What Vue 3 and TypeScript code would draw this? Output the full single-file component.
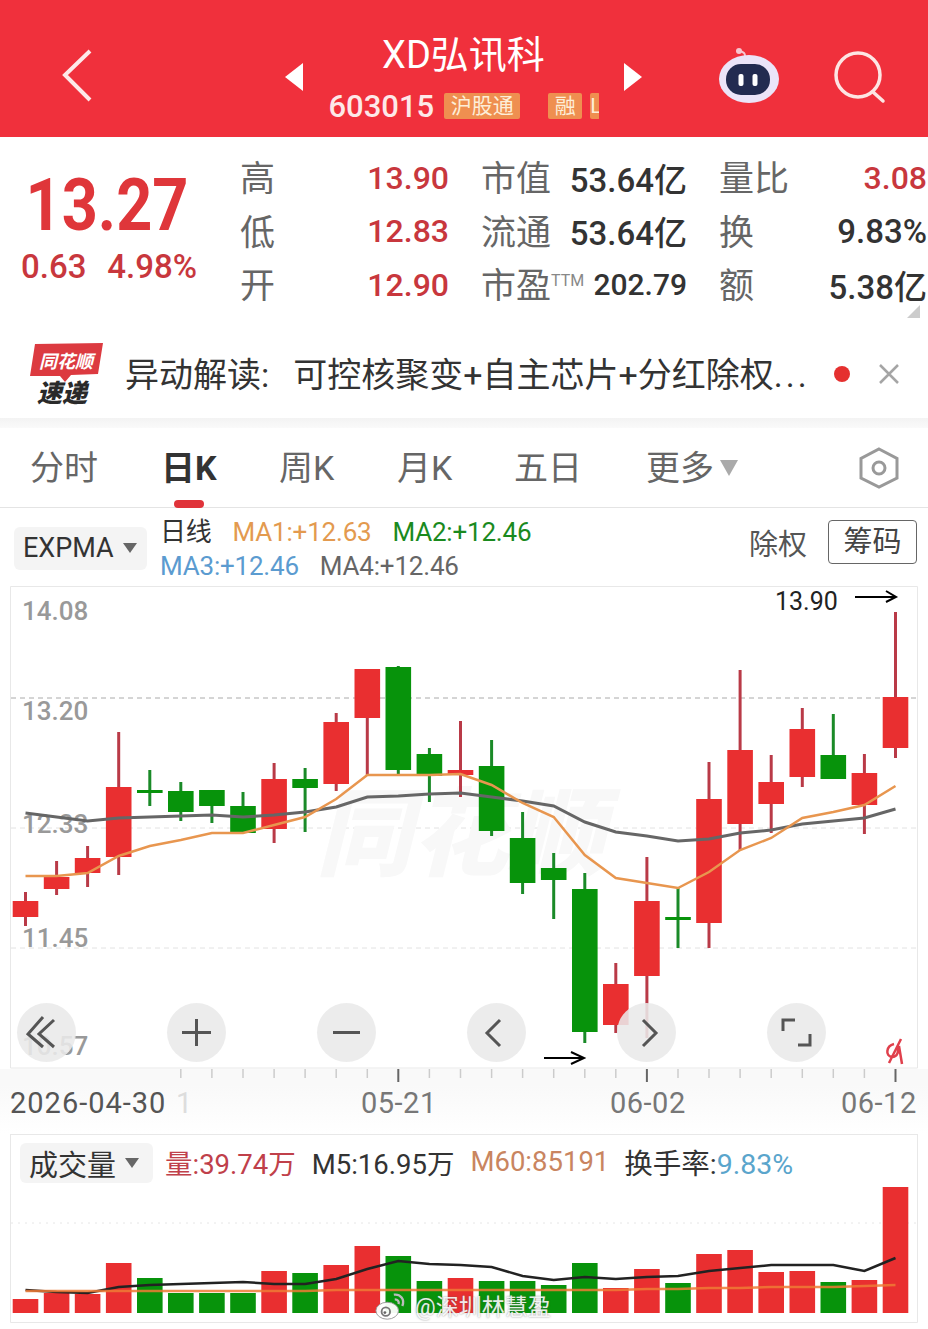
<template>
  <div class="page">
    <header class="topbar">
      <svg class="back" viewBox="60 47 36 56"><path d="M90 51 L65 75 L90 100" /></svg>
      <i class="arrow-left"></i>
      <div class="stock">
        <div class="stock-name">XD弘讯科</div>
        <div class="stock-sub">
          <span class="stock-code">603015</span>
          <span class="tag tag-hk">沪股通</span>
          <span class="tag tag-rong">融</span>
          <span class="tag tag-cut">L</span>
        </div>
      </div>
      <i class="arrow-right"></i>
      <svg class="robot" viewBox="719 47 60 60">
        <path class="robot-ant" d="M745 57 Q746 52 739 51" />
        <circle cx="739" cy="51" r="3" fill="#f7c6d0" />
        <ellipse cx="749" cy="79" rx="30" ry="24" fill="#ebe4f8" />
        <rect x="726" y="64" width="44" height="31" rx="15" fill="#222b50" />
        <rect x="738.5" y="74" width="5" height="12" rx="2" fill="#fff" />
        <rect x="752.5" y="74" width="5" height="12" rx="2" fill="#fff" />
      </svg>
      <svg class="search" viewBox="832 48 54 56">
        <circle cx="858" cy="75" r="22" />
        <path d="M873 92 L883 101" />
      </svg>
    </header>

    <section class="quote">
      <div class="price-box">
        <div class="price">13.27</div>
        <div class="change"><span>0.63</span><span>4.98%</span></div>
      </div>
      <div class="quote-grid">
        <div v-for="cell in quoteCells" :key="cell.label" class="quote-cell">
          <span class="q-label">{{ cell.label }}<sup v-if="cell.sup" class="q-sup">{{ cell.sup }}</sup></span>
          <span class="q-value" :class="cell.tone">{{ cell.value }}</span>
        </div>
      </div>
      <i class="corner"></i>
    </section>

    <section class="news">
      <svg class="news-logo" viewBox="25 340 84 70">
        <path d="M35 345 L103 344 L98 375 L71 376 L65 383 L60 377 L30 377 Z" fill="#dc3a40" />
        <text x="39" y="369" class="logo-top">同花顺</text>
        <text x="37" y="403" class="logo-bot">速递</text>
      </svg>
      <div class="news-text">异动解读:<span class="news-body">可控核聚变+自主芯片+分红除权<span class="news-dots">...</span></span></div>
      <i class="news-dot"></i>
      <svg class="news-close" viewBox="0 0 22 22"><path d="M2 2 L20 20 M20 2 L2 20" /></svg>
    </section>
    <div class="strip"></div>

    <nav class="tabs">
      <span
        v-for="tab in tabs"
        :key="tab.label"
        class="tab"
        :class="{ active: tab.active }"
        :style="{ left: tab.left + 'px' }"
      >{{ tab.label }}</span>
      <i class="more-arrow"></i>
      <svg class="hex" viewBox="858 446 42 44">
        <path d="M879 449 L897 458.500 V478 L879 487 L861 478 V458.500 Z" />
        <circle cx="879" cy="468" r="6" />
      </svg>
    </nav>

    <section class="indicator">
      <div class="pill pill-expma">EXPMA<i class="pill-arrow"></i></div>
      <div class="ma-lines">
        <div class="ma-row">
          <span class="ma-day">日线</span>
          <span class="ma1">MA1:+12.63</span>
          <span class="ma2">MA2:+12.46</span>
        </div>
        <div class="ma-row">
          <span class="ma3">MA3:+12.46</span>
          <span class="ma4">MA4:+12.46</span>
        </div>
      </div>
      <span class="adjust">除权</span>
      <span class="chips">筹码</span>
    </section>

    <section class="chart">
      <svg class="chart-svg" viewBox="0 586 928 499" width="928" height="499">
        <rect x="0" y="1069" width="928" height="16" fill="#f9f9f9" />
        <path class="frame" d="M10.500 1068 V586.500 H917.500 V1068 H10.500" />
        <path class="dash-main" d="M11 698 H917" />
        <path class="dash-soft" d="M11 828 H917 M11 948 H917" />
        <text x="316" y="868" class="watermark">同花顺</text>
        <text v-for="axis in yAxis" :key="axis.text" x="22" :y="axis.y" class="y-label">{{ axis.text }}</text>

        <g v-for="c in candles" :key="c.x">
          <path :d="`M${c.x} ${c.high} V${c.low}`" :class="c.up ? 'wick-up' : 'wick-down'" />
          <rect
            :x="c.x - 12.800"
            :y="c.top"
            width="25.600"
            :height="Math.max(c.bottom - c.top, 3)"
            :fill="c.up ? '#e92f30' : '#07930b'"
          />
        </g>
        <polyline class="ma-grey" :points="greyLine" />
        <polyline class="ma-orange" :points="orangeLine" />

        <text x="775" y="610" class="note">13.90</text>
        <path class="note-arrow" d="M855 597 H896 M886 591 L896 597 L886 602" />
        <path class="note-arrow" d="M544 1058 H584 M571 1052 L584 1058 L571 1064" />
        <path class="scribble" d="M901 1039 L889 1063 M894 1044 C886 1046 885 1056 892 1057 C898 1057 899 1050 898 1046 M899 1046 L902 1064" />

        <path
          v-for="t in ticks"
          :key="t.x"
          :d="`M${t.x} 1069 V${t.major ? 1082 : 1078}`"
          :class="t.major ? 'tick-major' : 'tick'"
        />
      </svg>
      <div class="chart-tools">
        <span class="tool">
          <svg viewBox="0 0 59 59"><path d="M26 14 L11 31 L26 44 M37 17 L22 31 L37 44" /></svg>
        </span>
        <span class="tool">
          <svg viewBox="0 0 59 59"><path d="M15 29.500 H44 M29.500 16 V43" /></svg>
        </span>
        <span class="tool">
          <svg viewBox="0 0 59 59"><path d="M16 29.500 H43" /></svg>
        </span>
        <span class="tool">
          <svg viewBox="0 0 59 59"><path d="M33 17 L20 30 L33 43" /></svg>
        </span>
        <span class="tool">
          <svg viewBox="0 0 59 59"><path d="M26 17 L39 30 L26 43" /></svg>
        </span>
        <span class="tool">
          <svg viewBox="0 0 59 59"><path d="M16 28 V17 H28 M43 31 V42 H31" /></svg>
        </span>
      </div>
    </section>

    <div class="dates">
      <span class="date-first">2026-04-30</span>
      <span class="date-ghost">1</span>
      <span class="date d1">05-21</span>
      <span class="date d2">06-02</span>
      <span class="date d3">06-12</span>
    </div>

    <section class="volume">
      <div class="vol-head">
        <div class="pill pill-vol">成交量<i class="pill-arrow"></i></div>
        <span class="v-red">量:39.74万</span>
        <span class="v-dark">M5:16.95万</span>
        <span class="v-tan">M60:85191</span>
        <span class="v-dark v-last">换手率:<span class="v-blue">9.83%</span></span>
      </div>
      <svg class="vol-svg" viewBox="0 1187 928 142" width="928" height="142">
        <path class="frame" d="M10.500 1187 V1322.500 H917.500 V1187" />
        <path class="vol-dots" d="M11 1223 H917" />
        <rect
          v-for="bar in volumeBars"
          :key="bar.x"
          :x="bar.x - 12.800"
          :y="bar.top"
          width="25.600"
          :height="1313 - bar.top"
          :fill="bar.up ? '#e92f30' : '#07930b'"
        />
        <polyline class="vol-black" :points="volBlackLine" />
        <polyline class="vol-orange" :points="volOrangeLine" />
      </svg>
    </section>

    <div class="weibo">
      <svg class="weibo-icon" viewBox="0 0 34 32">
        <ellipse cx="13" cy="21" rx="12" ry="9" />
        <circle cx="11.500" cy="22" r="4.500" class="weibo-eye" />
        <circle cx="10.500" cy="23" r="1.500" fill="#666" />
        <path class="weibo-arc" d="M20 4 C27 3 32 9 29 16 M21 9 C24 9 26 11 25 14" />
      </svg>
      <span>@深圳林慧盈</span>
    </div>
  </div>
</template>

<script setup lang="ts">
interface QuoteCell {
  label: string
  sup?: string
  value: string
  tone: string
}

// 每根K线: 最高, 实体上沿, 实体下沿, 最低, 是否上涨
type Raw = [number, number, number, number, boolean]

const START_X = 25.5
const STEP = 31.07

const xAt = (i: number): number => +(START_X + STEP * i).toFixed(1)

const quoteCells: QuoteCell[] = [
  { label: '高', value: '13.90', tone: 'red' },
  { label: '市值', value: '53.64亿', tone: 'dark' },
  { label: '量比', value: '3.08', tone: 'red' },
  { label: '低', value: '12.83', tone: 'red' },
  { label: '流通', value: '53.64亿', tone: 'dark' },
  { label: '换', value: '9.83%', tone: 'dark' },
  { label: '开', value: '12.90', tone: 'red' },
  { label: '市盈', sup: 'TTM', value: '202.79', tone: 'dark narrow' },
  { label: '额', value: '5.38亿', tone: 'dark' }
]

const tabs = [
  { label: '分时', left: 30 },
  { label: '日K', left: 161, active: true },
  { label: '周K', left: 279 },
  { label: '月K', left: 397 },
  { label: '五日', left: 514 },
  { label: '更多', left: 646 }
]

const yAxis = [
  { text: '14.08', y: 620 },
  { text: '13.20', y: 720 },
  { text: '12.33', y: 833 },
  { text: '11.45', y: 947 },
  { text: '10.57', y: 1055 }
]

const rawCandles: Raw[] = [
  [892, 901, 917, 926, true],
  [861, 877, 889, 895, true],
  [846, 858, 873, 887, true],
  [732, 787, 857, 875, true],
  [770, 790, 792, 806, false],
  [782, 791, 812, 821, false],
  [790, 790, 806, 823, false],
  [792, 806, 833, 833, false],
  [763, 779, 829, 843, true],
  [768, 779, 788, 832, false],
  [713, 722, 784, 791, true],
  [669, 669, 718, 775, true],
  [666, 667, 770, 775, false],
  [748, 754, 776, 802, false],
  [721, 770, 775, 797, true],
  [740, 766, 831, 836, false],
  [812, 838, 883, 894, false],
  [853, 868, 880, 919, false],
  [873, 889, 1032, 1043, false],
  [963, 984, 1025, 1033, true],
  [857, 901, 976, 1038, true],
  [888, 917, 920, 948, false],
  [762, 799, 923, 948, true],
  [670, 750, 824, 850, true],
  [755, 782, 804, 833, true],
  [708, 729, 777, 787, true],
  [714, 755, 779, 779, false],
  [754, 773, 805, 834, true],
  [612, 697, 748, 758, true]
]

const candles = rawCandles.map((c, i) => ({
  x: xAt(i),
  high: c[0],
  top: c[1],
  bottom: c[2],
  low: c[3],
  up: c[4]
}))

const toPoints = (ys: number[]): string => ys.map((y, i) => `${xAt(i)},${y}`).join(' ')

const orangeLine = toPoints([
  876, 876, 873, 856, 846, 840, 833, 833, 825, 817, 799, 775, 775, 775, 774,
  785, 803, 817, 855, 878, 883, 888, 872, 850, 838, 818, 812, 805, 786
])

const greyLine = toPoints([
  813, 817, 821, 818, 817, 816, 815, 817, 815, 812, 807, 797, 796, 794, 793,
  797, 801, 806, 822, 832, 836, 841, 839, 833, 830, 824, 821, 818, 809
])

const ticks = Array.from({ length: 24 }, (_, i) => {
  const n = i + 5
  return { x: xAt(n), major: n === 12 || n === 20 || n === 28 }
})

const volumeTops = [
  1299, 1293, 1294, 1263, 1278, 1293, 1293, 1293, 1271, 1273, 1265, 1246, 1256, 1281, 1278,
  1281, 1281, 1285, 1263, 1288, 1269, 1283, 1254, 1250, 1272, 1271, 1282, 1280, 1187
]

const volumeGreen = [4, 5, 6, 7, 9, 12, 13, 15, 16, 17, 18, 21, 26]

const volumeBars = volumeTops.map((top, i) => ({
  x: xAt(i),
  top,
  up: !volumeGreen.includes(i)
}))

const volBlackLine = toPoints([
  1290, 1292, 1293, 1287, 1285, 1284, 1283, 1282, 1284, 1284, 1279, 1269, 1261, 1264, 1265,
  1267, 1276, 1280, 1277, 1279, 1277, 1276, 1271, 1268, 1265, 1265, 1265, 1271, 1258
])

const volOrangeLine = toPoints([
  1291, 1291, 1291, 1291, 1291, 1291, 1291, 1291, 1291, 1291, 1290, 1290, 1290, 1290, 1290,
  1290, 1290, 1290, 1290, 1290, 1289, 1289, 1288, 1288, 1287, 1287, 1287, 1286, 1285
])
</script>

<style>
html,
body {
  margin: 0;
  background: #fff;
}
</style>

<style scoped>
.page {
  position: relative;
  width: 928px;
  height: 1329px;
  overflow: hidden;
  background: #fff;
  font-family: Roboto, "Noto Sans CJK SC", sans-serif;
  color: #333;
}

.page i {
  display: block;
  flex: none;
}

/* 顶栏 */
.topbar {
  display: flex;
  align-items: center;
  box-sizing: border-box;
  height: 137px;
  padding-top: 13px;
  background: #f0303c;
  color: #fff;
}

.back {
  width: 36px;
  height: 56px;
  margin-left: 60px;
  fill: none;
  stroke: #fde9e9;
  stroke-width: 4;
}

.arrow-left,
.arrow-right {
  width: 0;
  height: 0;
  margin-top: 3px;
  border-top: 14px solid transparent;
  border-bottom: 14px solid transparent;
}

.arrow-left {
  margin-left: 189px;
  border-right: 18px solid #fff;
}

.arrow-right {
  border-left: 18px solid #fff;
}

.stock {
  display: flex;
  flex-direction: column;
  align-items: center;
  width: 321px;
}

.stock-name {
  font-size: 38px;
  line-height: 46px;
  margin-top: 5px;
}

.stock-sub {
  display: flex;
  align-items: center;
  width: 270px;
  height: 34px;
  margin-top: 11px;
  overflow: hidden;
}

.stock-code {
  font-size: 31px;
  font-weight: 500;
  color: #fde9e9;
  margin-right: 10px;
}

.tag {
  flex: none;
  height: 26px;
  line-height: 26px;
  background: #ef8f50;
  color: #fdeed8;
  font-size: 21px;
  text-align: center;
  border-radius: 2px;
  overflow: hidden;
}

.tag-hk {
  width: 76px;
}

.tag-rong {
  width: 34px;
  margin-left: 28px;
}

.tag-cut {
  width: 10px;
  margin-left: 8px;
}

.robot {
  width: 60px;
  height: 60px;
  margin-left: 77px;
  margin-top: 4px;
}

.robot-ant {
  fill: none;
  stroke: #f7c6d0;
  stroke-width: 2;
}

.search {
  width: 54px;
  height: 56px;
  margin-left: 53px;
  margin-top: 2px;
  fill: none;
  stroke: #fde5e3;
  stroke-width: 3.500;
  stroke-linecap: round;
}

/* 报价 */
.quote {
  position: relative;
  display: flex;
  height: 193px;
  padding-left: 21px;
}

.price-box {
  width: 176px;
  flex: none;
}

.price {
  margin-top: 36px;
  padding-right: 4px;
  text-align: center;
  font-size: 63px;
  line-height: 66px;
  font-weight: 700;
  color: #df363a;
  transform: scaleY(1.14);
}

.change {
  display: flex;
  justify-content: space-between;
  margin-top: 9px;
  font-size: 33px;
  line-height: 38px;
  font-weight: 500;
  color: #c8373d;
}

.quote-grid {
  display: grid;
  grid-template-columns: 209px 206px 208px;
  column-gap: 32px;
  grid-auto-rows: 53.500px;
  margin-left: 43px;
  padding-top: 14px;
}

.quote-cell {
  display: flex;
  align-items: center;
  justify-content: space-between;
}

.q-label {
  margin-top: -4px;
  font-size: 35px;
  color: #666;
  white-space: nowrap;
}

.q-sup {
  font-size: 16px;
  vertical-align: 12px;
  line-height: 0;
  color: #888;
}

.q-value {
  font-weight: 500;
  white-space: nowrap;
}

.q-value.red {
  font-size: 32px;
  color: #c8373d;
}

.q-value.dark {
  font-size: 33px;
  color: #333;
}

.q-value.narrow {
  font-size: 30px;
}

.corner {
  position: absolute;
  right: 8px;
  top: 168px;
  width: 0;
  height: 0;
  border-left: 13px solid transparent;
  border-bottom: 13px solid #ccc;
}

/* 异动解读 */
.news {
  display: flex;
  align-items: center;
  height: 88px;
}

.news-logo {
  width: 84px;
  height: 70px;
  margin-left: 25px;
  flex: none;
}

.logo-top {
  font-size: 18px;
  font-weight: 700;
  font-style: italic;
  fill: #fff;
}

.logo-bot {
  font-size: 25px;
  font-weight: 900;
  font-style: italic;
  fill: #2a2a2a;
}

.news-text {
  width: 700px;
  margin-left: 16px;
  margin-top: -4px;
  font-size: 34px;
  white-space: nowrap;
  overflow: hidden;
  color: #333;
}

.news-body {
  margin-left: 24px;
}

.news-dots {
  letter-spacing: 3px;
}

.news-dot {
  width: 16px;
  height: 16px;
  margin-left: 9px;
  border-radius: 50%;
  background: #e5302f;
}

.news-close {
  width: 22px;
  height: 22px;
  margin-left: 28px;
  fill: none;
  stroke: #a5a5a5;
  stroke-width: 2.500;
}

.strip {
  height: 10px;
  background: linear-gradient(#f3f3f3, #fafafa);
}

/* 周期切换 */
.tabs {
  position: relative;
  height: 79px;
  border-bottom: 1px solid #e4e4e4;
  box-sizing: content-box;
}

.tab {
  position: absolute;
  top: 17px;
  font-size: 34px;
  line-height: 46px;
  color: #666;
}

.tab.active {
  font-weight: 700;
  color: #333;
}

.tab.active::after {
  content: "";
  position: absolute;
  left: 13px;
  top: 55px;
  width: 30px;
  height: 8px;
  border-radius: 4px;
  background: #e0333a;
}

.more-arrow {
  position: absolute;
  left: 720px;
  top: 32px;
  width: 0;
  height: 0;
  border-left: 9px solid transparent;
  border-right: 9px solid transparent;
  border-top: 16px solid #aaa;
}

.hex {
  position: absolute;
  left: 858px;
  top: 18px;
  width: 42px;
  height: 44px;
  fill: none;
  stroke: #999;
  stroke-width: 3;
}

/* 指标栏 */
.indicator {
  position: relative;
  display: flex;
  align-items: center;
  height: 78px;
  padding-left: 14px;
}

.pill {
  display: flex;
  align-items: center;
  background: #f4f4f4;
  border-radius: 6px;
  box-sizing: border-box;
  color: #333;
}

.pill-expma {
  width: 133px;
  height: 43px;
  padding-left: 9px;
  font-size: 27px;
  margin-top: 2px;
}

.pill-arrow {
  width: 0;
  height: 0;
  margin-left: 9px;
  border-left: 7px solid transparent;
  border-right: 7px solid transparent;
  border-top: 10px solid #666;
}

.ma-lines {
  margin-left: 13px;
  margin-top: 4px;
  font-size: 26px;
  line-height: 34px;
  letter-spacing: -0.2px;
}

.ma-row {
  display: flex;
  gap: 21px;
  white-space: nowrap;
}

.ma-day {
  color: #333;
}

.ma1 {
  color: #e39a4f;
}

.ma2 {
  color: #1a8a1e;
}

.ma3 {
  color: #5b9bd0;
}

.ma4 {
  color: #666;
}

.adjust {
  margin-left: auto;
  margin-bottom: 10px;
  font-size: 29px;
  color: #555;
}

.chips {
  margin-left: 21px;
  margin-right: 11px;
  margin-bottom: 11px;
  box-sizing: border-box;
  width: 89px;
  height: 44px;
  line-height: 42px;
  text-align: center;
  font-size: 29px;
  color: #444;
  border: 1px solid #666;
  border-radius: 4px;
}

/* K线图 */
.chart {
  position: relative;
  height: 499px;
}

.chart-svg {
  display: block;
}

.frame {
  fill: none;
  stroke: #e8e8e8;
  stroke-width: 1;
}

.dash-main {
  stroke: #aaa;
  stroke-width: 1;
  stroke-dasharray: 5 4;
}

.dash-soft {
  stroke: #e2e2e2;
  stroke-width: 1;
  stroke-dasharray: 5 4;
}

.watermark {
  font-size: 96px;
  font-weight: 900;
  font-style: italic;
  fill: #f8f8f8;
}

.y-label {
  font-size: 26px;
  font-weight: 500;
  fill: #999;
}

.wick-up {
  stroke: #b93a47;
  stroke-width: 3;
}

.wick-down {
  stroke: #1a8a28;
  stroke-width: 3;
}

.ma-orange {
  fill: none;
  stroke: #e8964f;
  stroke-width: 2.500;
}

.ma-grey {
  fill: none;
  stroke: #666;
  stroke-width: 3;
}

.note {
  font-size: 25px;
  fill: #222;
}

.note-arrow {
  fill: none;
  stroke: #000;
  stroke-width: 2;
}

.scribble {
  fill: none;
  stroke: #e0404c;
  stroke-width: 2.500;
}

.tick {
  stroke: #ccc;
  stroke-width: 1.500;
}

.tick-major {
  stroke: #666;
  stroke-width: 2;
}

.chart-tools {
  position: absolute;
  left: 17px;
  top: 417px;
  display: flex;
  gap: 91px;
}

.tool {
  display: block;
  width: 59px;
  height: 59px;
  border-radius: 50%;
  background: rgba(233, 233, 233, 0.88);
}

.tool svg {
  display: block;
  fill: none;
  stroke: #555;
  stroke-width: 3;
}

/* 日期 */
.dates {
  position: relative;
  height: 49px;
  font-size: 29px;
  line-height: 36px;
  letter-spacing: 0.5px;
  color: #777;
  background: linear-gradient(#f9f9f9, #fff);
}

.date-first {
  position: absolute;
  left: 10px;
  letter-spacing: 1px;
  color: #555;
}

.date-ghost {
  position: absolute;
  left: 176px;
  color: #ddd;
}

.date {
  position: absolute;
}

.d1 {
  left: 361px;
}

.d2 {
  left: 610px;
}

.d3 {
  left: 841px;
}

/* 成交量 */
.vol-head {
  display: flex;
  align-items: center;
  gap: 16px;
  height: 53px;
  margin: 0 10px;
  padding-left: 9px;
  padding-top: 4px;
  box-sizing: border-box;
  border-top: 1px solid #e8e8e8;
  border-left: 1px solid #e8e8e8;
  border-right: 1px solid #e8e8e8;
  font-size: 27.500px;
  white-space: nowrap;
}

.vol-head > span {
  margin-top: -3px;
}

.vol-head > .v-last {
  margin-left: -1px;
  font-size: 28.500px;
}

.pill-vol {
  width: 133px;
  height: 40px;
  padding-left: 9px;
  font-size: 29px;
  flex: none;
  margin-right: -4px;
}

.v-red {
  color: #c0404a;
}

.v-dark {
  color: #333;
}

.v-tan {
  color: #c98560;
}

.v-blue {
  color: #5aa5cc;
}

.vol-svg {
  display: block;
}

.vol-dots {
  stroke: #e6e6e6;
  stroke-width: 1;
  stroke-dasharray: 2 5;
}

.vol-black {
  fill: none;
  stroke: #222;
  stroke-width: 2.500;
}

.vol-orange {
  fill: none;
  stroke: #ee7a35;
  stroke-width: 2.500;
  opacity: 0.85;
}

/* 水印 */
.weibo {
  position: absolute;
  left: 375px;
  top: 1291px;
  display: flex;
  align-items: center;
  gap: 8px;
  font-size: 23px;
  line-height: 34px;
  color: rgba(255, 255, 255, 0.9);
  text-shadow: 0 0 2px rgba(90, 90, 90, 0.7);
  white-space: nowrap;
}

.weibo-icon {
  flex: none;
  width: 32px;
  height: 32px;
  margin-top: -5px;
}

.weibo-icon ellipse {
  fill: rgba(255, 255, 255, 0.95);
  stroke: #999;
  stroke-width: 1;
}

.weibo-eye {
  fill: none;
  stroke: #777;
  stroke-width: 2;
}

.weibo-arc {
  fill: none;
  stroke: #bbb;
  stroke-width: 2.500;
}
</style>
